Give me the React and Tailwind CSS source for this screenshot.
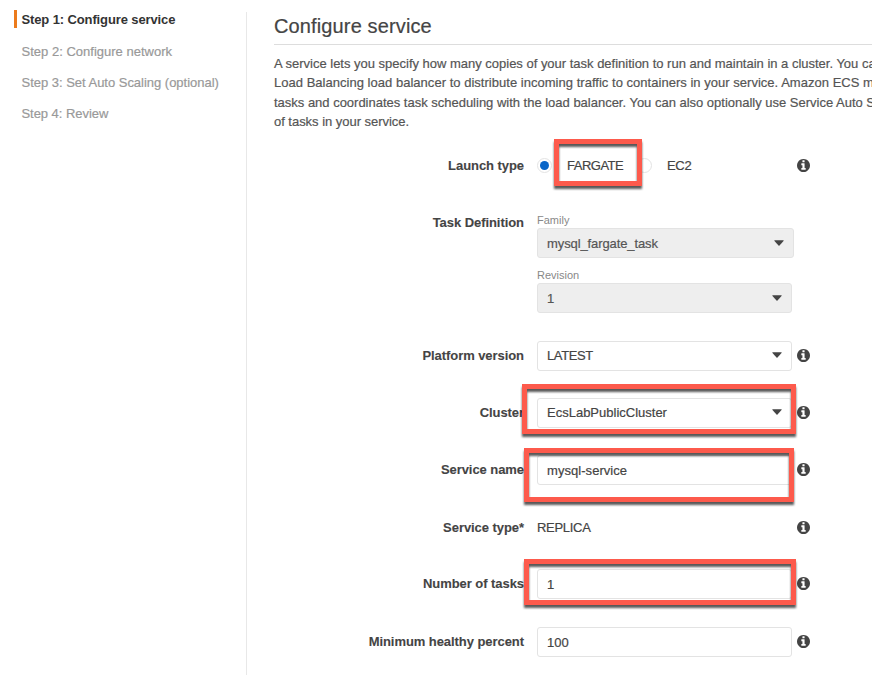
import React from "react";

const steps = [
  { label: "Step 2: Configure network", tracking: "tracking-[0.01px]" },
  { label: "Step 3: Set Auto Scaling (optional)", tracking: "tracking-[-0.02px]" },
  { label: "Step 4: Review", tracking: "tracking-[-0.05px]" },
];

const intro = [
  { text: "A service lets you specify how many copies of your task definition to run and maintain in a cluster. You ca", tracking: "tracking-[-0.01px]" },
  { text: "Load Balancing load balancer to distribute incoming traffic to containers in your service. Amazon ECS m", tracking: "tracking-[0.025px]" },
  { text: "tasks and coordinates task scheduling with the load balancer. You can also optionally use Service Auto S", tracking: "tracking-[-0.01px]" },
  { text: "of tasks in your service.", tracking: "tracking-[-0.03px]" },
];

function Highlight({ className }) {
  return (
    <div
      className={`pointer-events-none absolute border-5 border-[#fd5a4c] drop-shadow-[0_3px_1px_rgba(0,0,0,0.65)] ${className}`}
    />
  );
}

function Caret() {
  return (
    <svg className="h-[6px] w-[10px] fill-[#444]" viewBox="0 0 10 6">
      <path d="M.8 .2h8.4q.9 0 .3.7L5.5 5.5q-.5.5-1 0L.5.9Q-.1 .2 .8 .2z" />
    </svg>
  );
}

function InfoIcon() {
  return (
    <svg className="size-[13px] fill-[#444]" viewBox="128 128 1536 1536">
      <path d="M1152 1376v-160q0-14-9-23t-23-9h-96v-512q0-14-9-23t-23-9h-320q-14 0-23 9t-9 23v160q0 14 9 23t23 9h96v320h-96q-14 0-23 9t-9 23v160q0 14 9 23t23 9h448q14 0 23-9t9-23zm-128-896v-160q0-14-9-23t-23-9h-192q-14 0-23 9t-9 23v160q0 14 9 23t23 9h192q14 0 23-9t9-23zm640 416q0 209-103 385.5t-279.5 279.5-385.5 103-385.5-103-279.5-279.5-103-385.5 103-385.5 279.5-279.5 385.5-103 385.5 103 279.5 279.5 103 385.5z" />
    </svg>
  );
}

function Select({ value, disabled, wide, tracking = "" }) {
  return (
    <div
      className={`flex h-[30px] items-center justify-between rounded-[3px] border border-[#e3e3e3] px-[9px] ${
        disabled ? "bg-[#eee] text-[#555]" : "bg-white pb-[2px]"
      } ${wide ? "w-[257px]" : "w-[255px]"}`}
    >
      <span className={tracking}>{value}</span>
      <Caret />
    </div>
  );
}

function Input({ value, tracking = "" }) {
  return (
    <div className="flex h-[30px] w-[255px] items-center rounded-[3px] border border-[#e3e3e3] bg-white pt-px pl-[9px]">
      <span className={tracking}>{value}</span>
    </div>
  );
}

function Row({ label, info = true, className = "", labelClass = "h-[29px]", children }) {
  return (
    <div className={`relative flex ${className}`}>
      <div className={`flex w-[250px] shrink-0 items-center justify-end font-bold tracking-[-0.06px] text-[#444] [-webkit-text-stroke:0.1px] ${labelClass}`}>
        {label}
      </div>
      <div className="ml-[13px] w-[260px] shrink-0">{children}</div>
      {info && (
        <div className="flex h-[28px] items-center">
          <InfoIcon />
        </div>
      )}
    </div>
  );
}

function Radio({ checked }) {
  return (
    <span className="flex size-[15px] shrink-0 items-center justify-center rounded-full border border-[#e3e3e3] bg-white">
      {checked && <span className="size-[9px] rounded-full bg-[#0a66c8]" />}
    </span>
  );
}

export default function App() {
  return (
    <div className="flex h-[675px] w-[872px] overflow-hidden bg-white font-['Liberation_Sans',Arial,sans-serif] text-[13px] leading-[19px] whitespace-nowrap text-[#444] [-webkit-text-stroke:0.2px]">
      <nav className="w-[246px] shrink-0 pt-[10px] pl-[14px]">
        <div className="flex h-[18px] items-center border-l-3 border-[#ec7b1c] pl-[4.5px] font-bold text-[#333] [-webkit-text-stroke:0px]">
          <span className="tracking-[-0.12px]">Step 1: Configure service</span>
        </div>
        <ul className="mt-[14px] ml-[7.5px] flex flex-col gap-[12px] text-[#999]">
          {steps.map((s) => (
            <li key={s.label} className={s.tracking}>{s.label}</li>
          ))}
        </ul>
      </nav>
      <main className="mt-[12px] w-[626px] shrink-0 overflow-hidden border-l border-[#e8e8e8] pl-[27px]">
        <h1 className="h-[33px] border-b border-[#ddd] text-[20px] leading-[29px] tracking-[0.13px]">
          Configure service
        </h1>
        <div className="mt-[9px] leading-[19.3px] text-[#555]">
          {intro.map((l) => (
            <p key={l.text} className={l.tracking}>{l.text}</p>
          ))}
        </div>
        <form className="mt-[20px]">
          <Row label="Launch type">
            <div className="flex h-[29px] items-center">
              <Radio checked />
              <span className="ml-[15px] w-[70px] tracking-[-0.5px]">FARGATE</span>
              <Radio />
              <span className="ml-[15px] tracking-[-0.3px]">EC2</span>
            </div>
            <Highlight className="top-[-12px] left-[280px] h-[47px] w-[88px]" />
          </Row>
          <Row label="Task Definition" className="mt-[27px]" labelClass="h-[31px]" info={false}>
            <div className="mt-[5px] text-[11px] leading-[16px] text-[#888] [-webkit-text-stroke:0px]">Family</div>
            <Select value="mysql_fargate_task" disabled wide tracking="tracking-[-0.1px]" />
            <div className="mt-[10px] text-[11px] leading-[15px] text-[#888] [-webkit-text-stroke:0px]">Revision</div>
            <Select value="1" disabled />
          </Row>
          <Row label="Platform version" className="mt-[28px]">
            <Select value="LATEST" tracking="tracking-[-0.4px]" />
          </Row>
          <Row label="Cluster" className="mt-[27px]">
            <Select value="EcsLabPublicCluster" />
            <Highlight className="top-[-14px] left-[248px] h-[50px] w-[274px]" />
          </Row>
          <Row label="Service name" className="mt-[27px]">
            <Input value="mysql-service" tracking="tracking-[0.05px]" />
            <Highlight className="top-[-7px] left-[250px] h-[54px] w-[270px]" />
          </Row>
          <Row label="Service type*" className="mt-[28px]">
            <div className="flex h-[29px] items-center tracking-[-0.3px]">REPLICA</div>
          </Row>
          <Row label="Number of tasks" className="mt-[27px]">
            <Input value="1" />
            <Highlight className="top-[-10px] left-[250px] h-[46px] w-[272px]" />
          </Row>
          <Row label="Minimum healthy percent" className="mt-[28px]">
            <Input value="100" />
          </Row>
        </form>
      </main>
    </div>
  );
}
